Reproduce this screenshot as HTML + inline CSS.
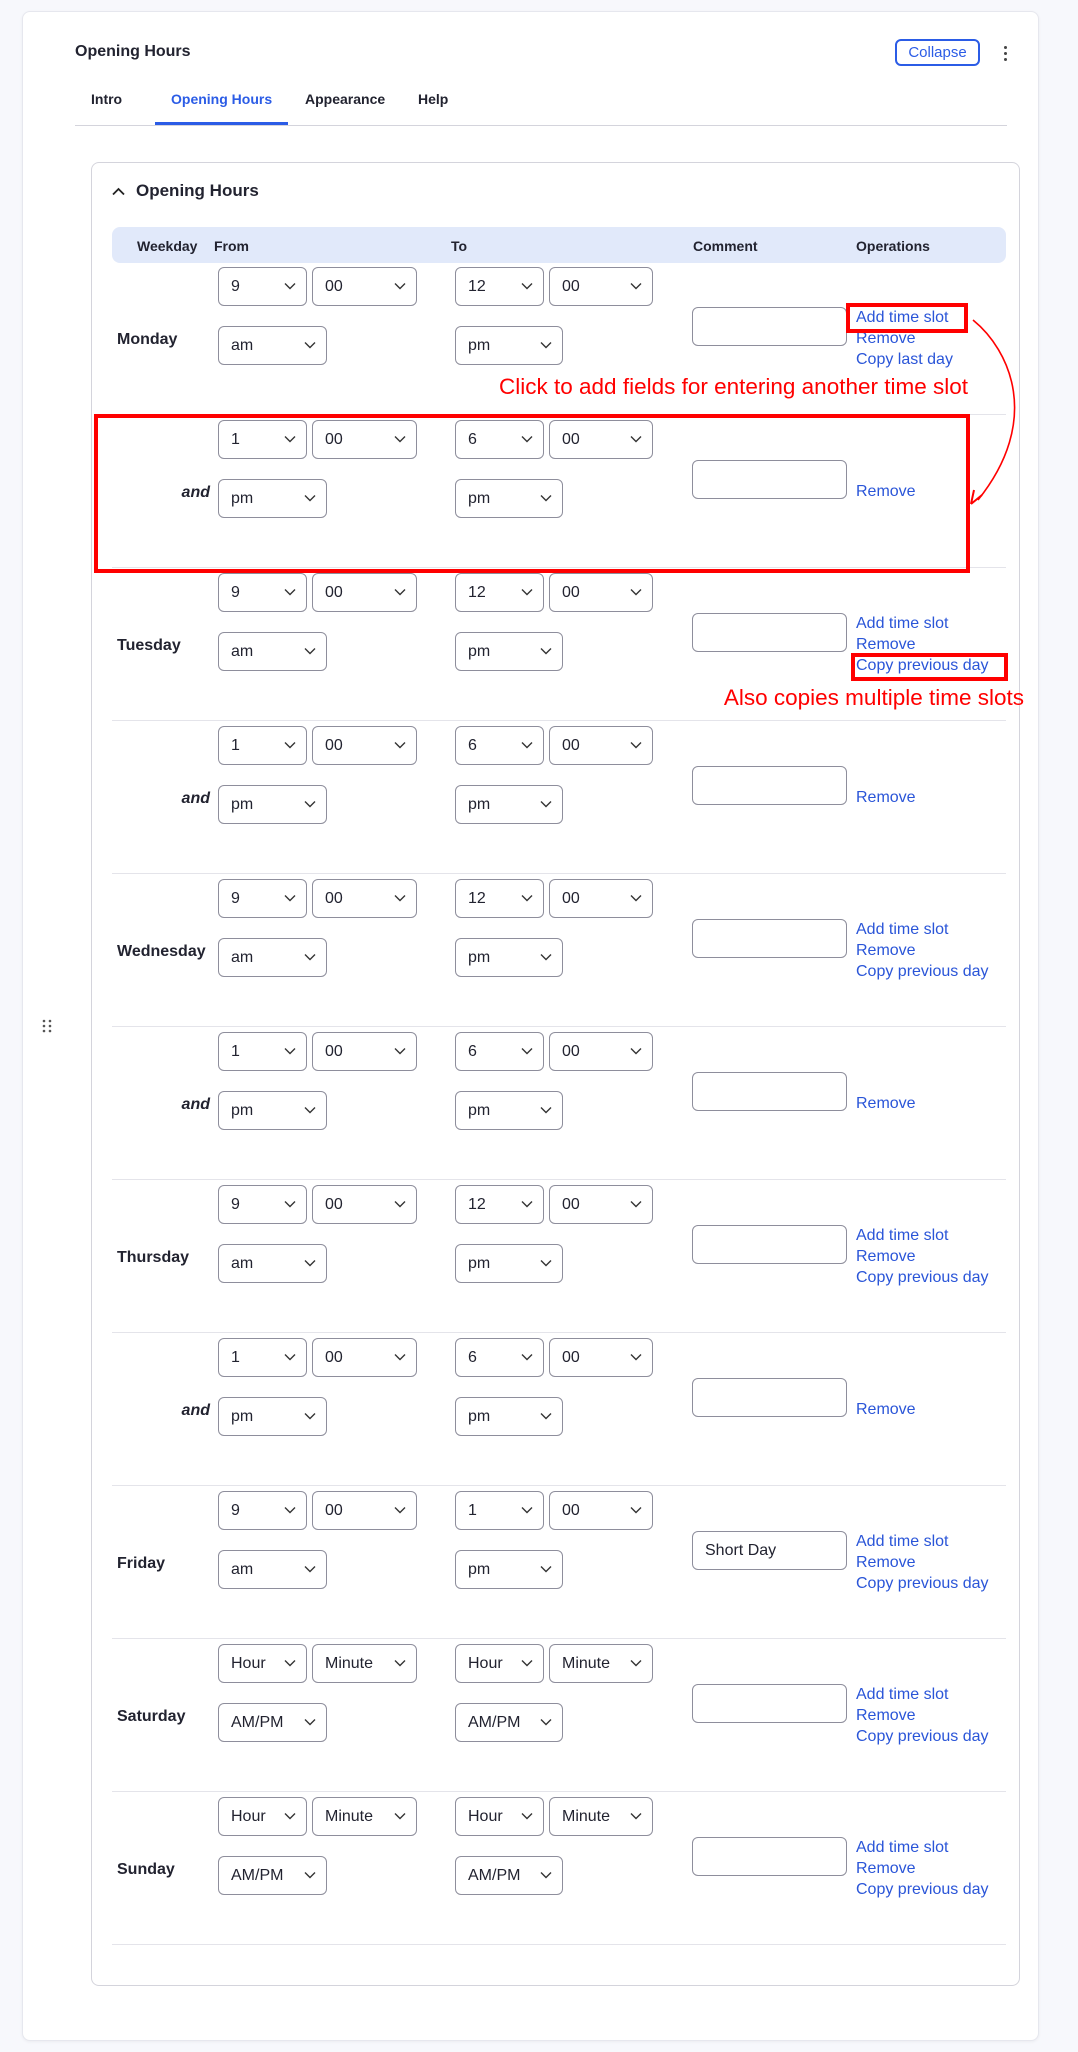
<!DOCTYPE html>
<html><head><meta charset="utf-8"><style>
*{box-sizing:border-box;margin:0;padding:0}
body{width:1078px;height:2052px;background:#f7f8fc;font-family:"Liberation Sans",sans-serif;color:#222330;position:relative;overflow:hidden}
.abs{position:absolute}
.outer{left:22px;top:11px;width:1017px;height:2030px;background:#fff;border:1px solid #e6e7ee;border-radius:8px;box-shadow:0 1px 3px rgba(0,0,0,.05)}
.inner{left:91px;top:162px;width:929px;height:1824px;border:1px solid #d4d4dc;border-radius:8px;background:#fff}
.sel{position:absolute;height:39px;border:1px solid #8e8e9c;border-radius:6px;background:#fff;font-size:16px;line-height:37px;padding-left:12px;color:#222330}
.sel svg{position:absolute;right:10px;top:14px}
.row{position:absolute;left:0;width:1078px;height:153px}
.sep{position:absolute;left:112px;width:894px;height:1px;background:#e4e4ea}
.cm{position:absolute;left:692px;top:46px;width:155px;height:39px;border:1px solid #8e8e9c;border-radius:6px;font-size:16px;line-height:37px;padding-left:12px}
.ops{position:absolute;left:856px;top:46px;font-size:16px;line-height:21px;color:#2a55d8}
.day{position:absolute;left:117px;top:69px;font-size:16px;font-weight:bold;line-height:20px}
.and{position:absolute;right:868px;top:69px;font-size:16px;font-weight:bold;font-style:italic;line-height:20px}
.a{left:218px;top:6px;width:89px}.b{left:312px;top:6px;width:105px}.c{left:218px;top:65px;width:109px}
.d{left:455px;top:6px;width:89px}.e{left:549px;top:6px;width:104px}.f{left:455px;top:65px;width:108px}
.th{position:absolute;top:237px;font-size:14px;font-weight:bold;line-height:18px}
.red{color:#f00;font-size:22.5px}
</style></head><body>
<svg width="0" height="0" style="position:absolute"><defs><symbol id="ch" viewBox="0 0 12 8"><path d="M1 1.5 L6 6.5 L11 1.5" fill="none" stroke="#333" stroke-width="1.4"/></symbol></defs></svg>
<div class="abs outer"></div>
<div class="abs" style="left:75px;top:43px;font-size:16px;font-weight:bold">Opening Hours</div>
<div class="abs" style="left:895px;top:39px;width:85px;height:27px;border:2px solid #2b5ce6;border-radius:6px;color:#2b5ce6;font-size:15px;line-height:23px;text-align:center">Collapse</div>
<div class="abs" style="left:1004px;top:46px;width:3px;height:3px;border-radius:2px;background:#444"></div>
<div class="abs" style="left:1004px;top:52px;width:3px;height:3px;border-radius:2px;background:#444"></div>
<div class="abs" style="left:1004px;top:58px;width:3px;height:3px;border-radius:2px;background:#444"></div>
<div class="abs" style="left:91px;top:91px;font-size:14px;font-weight:bold">Intro</div>
<div class="abs" style="left:171px;top:91px;font-size:14px;font-weight:bold;color:#2b5ce6">Opening Hours</div>
<div class="abs" style="left:305px;top:91px;font-size:14px;font-weight:bold">Appearance</div>
<div class="abs" style="left:418px;top:91px;font-size:14px;font-weight:bold">Help</div>
<div class="abs" style="left:75px;top:125px;width:932px;height:1px;background:#d4d4dc"></div>
<div class="abs" style="left:155px;top:122px;width:133px;height:3px;background:#2b5ce6"></div>
<div class="abs" style="left:42px;top:1019px;font-size:0">
<svg width="10" height="14"><g fill="#555"><circle cx="2" cy="2" r="1.3"/><circle cx="8" cy="2" r="1.3"/><circle cx="2" cy="7" r="1.3"/><circle cx="8" cy="7" r="1.3"/><circle cx="2" cy="12" r="1.3"/><circle cx="8" cy="12" r="1.3"/></g></svg></div>
<div class="abs inner"></div>
<svg class="abs" style="left:112px;top:187px" width="13" height="9"><path d="M1 7.5 L6.5 2 L12 7.5" fill="none" stroke="#222" stroke-width="1.8"/></svg>
<div class="abs" style="left:136px;top:181px;font-size:17px;font-weight:bold">Opening Hours</div>
<div class="abs" style="left:112px;top:227px;width:894px;height:36px;background:#e1e9fa;border-radius:8px"></div>
<div class="th" style="left:137px">Weekday</div>
<div class="th" style="left:214px">From</div>
<div class="th" style="left:451px">To</div>
<div class="th" style="left:693px">Comment</div>
<div class="th" style="left:856px">Operations</div>

<div class="row" style="top:261px"><div class="day">Monday</div>
<div class="sel a">9<svg width="12" height="8"><use href="#ch"/></svg></div><div class="sel b">00<svg width="12" height="8"><use href="#ch"/></svg></div><div class="sel c">am<svg width="12" height="8"><use href="#ch"/></svg></div>
<div class="sel d">12<svg width="12" height="8"><use href="#ch"/></svg></div><div class="sel e">00<svg width="12" height="8"><use href="#ch"/></svg></div><div class="sel f">pm<svg width="12" height="8"><use href="#ch"/></svg></div>
<div class="cm"></div><div class="ops">Add time slot<br>Remove<br>Copy last day</div></div>
<div class="sep" style="top:414px"></div>

<div class="row" style="top:414px"><div class="and">and</div>
<div class="sel a">1<svg width="12" height="8"><use href="#ch"/></svg></div><div class="sel b">00<svg width="12" height="8"><use href="#ch"/></svg></div><div class="sel c">pm<svg width="12" height="8"><use href="#ch"/></svg></div>
<div class="sel d">6<svg width="12" height="8"><use href="#ch"/></svg></div><div class="sel e">00<svg width="12" height="8"><use href="#ch"/></svg></div><div class="sel f">pm<svg width="12" height="8"><use href="#ch"/></svg></div>
<div class="cm"></div><div class="ops" style="top:67px">Remove</div></div>
<div class="sep" style="top:567px"></div>

<div class="row" style="top:567px"><div class="day">Tuesday</div>
<div class="sel a">9<svg width="12" height="8"><use href="#ch"/></svg></div><div class="sel b">00<svg width="12" height="8"><use href="#ch"/></svg></div><div class="sel c">am<svg width="12" height="8"><use href="#ch"/></svg></div>
<div class="sel d">12<svg width="12" height="8"><use href="#ch"/></svg></div><div class="sel e">00<svg width="12" height="8"><use href="#ch"/></svg></div><div class="sel f">pm<svg width="12" height="8"><use href="#ch"/></svg></div>
<div class="cm"></div><div class="ops">Add time slot<br>Remove<br>Copy previous day</div></div>
<div class="sep" style="top:720px"></div>

<div class="row" style="top:720px"><div class="and">and</div>
<div class="sel a">1<svg width="12" height="8"><use href="#ch"/></svg></div><div class="sel b">00<svg width="12" height="8"><use href="#ch"/></svg></div><div class="sel c">pm<svg width="12" height="8"><use href="#ch"/></svg></div>
<div class="sel d">6<svg width="12" height="8"><use href="#ch"/></svg></div><div class="sel e">00<svg width="12" height="8"><use href="#ch"/></svg></div><div class="sel f">pm<svg width="12" height="8"><use href="#ch"/></svg></div>
<div class="cm"></div><div class="ops" style="top:67px">Remove</div></div>
<div class="sep" style="top:873px"></div>

<div class="row" style="top:873px"><div class="day">Wednesday</div>
<div class="sel a">9<svg width="12" height="8"><use href="#ch"/></svg></div><div class="sel b">00<svg width="12" height="8"><use href="#ch"/></svg></div><div class="sel c">am<svg width="12" height="8"><use href="#ch"/></svg></div>
<div class="sel d">12<svg width="12" height="8"><use href="#ch"/></svg></div><div class="sel e">00<svg width="12" height="8"><use href="#ch"/></svg></div><div class="sel f">pm<svg width="12" height="8"><use href="#ch"/></svg></div>
<div class="cm"></div><div class="ops">Add time slot<br>Remove<br>Copy previous day</div></div>
<div class="sep" style="top:1026px"></div>

<div class="row" style="top:1026px"><div class="and">and</div>
<div class="sel a">1<svg width="12" height="8"><use href="#ch"/></svg></div><div class="sel b">00<svg width="12" height="8"><use href="#ch"/></svg></div><div class="sel c">pm<svg width="12" height="8"><use href="#ch"/></svg></div>
<div class="sel d">6<svg width="12" height="8"><use href="#ch"/></svg></div><div class="sel e">00<svg width="12" height="8"><use href="#ch"/></svg></div><div class="sel f">pm<svg width="12" height="8"><use href="#ch"/></svg></div>
<div class="cm"></div><div class="ops" style="top:67px">Remove</div></div>
<div class="sep" style="top:1179px"></div>

<div class="row" style="top:1179px"><div class="day">Thursday</div>
<div class="sel a">9<svg width="12" height="8"><use href="#ch"/></svg></div><div class="sel b">00<svg width="12" height="8"><use href="#ch"/></svg></div><div class="sel c">am<svg width="12" height="8"><use href="#ch"/></svg></div>
<div class="sel d">12<svg width="12" height="8"><use href="#ch"/></svg></div><div class="sel e">00<svg width="12" height="8"><use href="#ch"/></svg></div><div class="sel f">pm<svg width="12" height="8"><use href="#ch"/></svg></div>
<div class="cm"></div><div class="ops">Add time slot<br>Remove<br>Copy previous day</div></div>
<div class="sep" style="top:1332px"></div>

<div class="row" style="top:1332px"><div class="and">and</div>
<div class="sel a">1<svg width="12" height="8"><use href="#ch"/></svg></div><div class="sel b">00<svg width="12" height="8"><use href="#ch"/></svg></div><div class="sel c">pm<svg width="12" height="8"><use href="#ch"/></svg></div>
<div class="sel d">6<svg width="12" height="8"><use href="#ch"/></svg></div><div class="sel e">00<svg width="12" height="8"><use href="#ch"/></svg></div><div class="sel f">pm<svg width="12" height="8"><use href="#ch"/></svg></div>
<div class="cm"></div><div class="ops" style="top:67px">Remove</div></div>
<div class="sep" style="top:1485px"></div>

<div class="row" style="top:1485px"><div class="day">Friday</div>
<div class="sel a">9<svg width="12" height="8"><use href="#ch"/></svg></div><div class="sel b">00<svg width="12" height="8"><use href="#ch"/></svg></div><div class="sel c">am<svg width="12" height="8"><use href="#ch"/></svg></div>
<div class="sel d">1<svg width="12" height="8"><use href="#ch"/></svg></div><div class="sel e">00<svg width="12" height="8"><use href="#ch"/></svg></div><div class="sel f">pm<svg width="12" height="8"><use href="#ch"/></svg></div>
<div class="cm">Short Day</div><div class="ops">Add time slot<br>Remove<br>Copy previous day</div></div>
<div class="sep" style="top:1638px"></div>

<div class="row" style="top:1638px"><div class="day">Saturday</div>
<div class="sel a">Hour<svg width="12" height="8"><use href="#ch"/></svg></div><div class="sel b">Minute<svg width="12" height="8"><use href="#ch"/></svg></div><div class="sel c">AM/PM<svg width="12" height="8"><use href="#ch"/></svg></div>
<div class="sel d">Hour<svg width="12" height="8"><use href="#ch"/></svg></div><div class="sel e">Minute<svg width="12" height="8"><use href="#ch"/></svg></div><div class="sel f">AM/PM<svg width="12" height="8"><use href="#ch"/></svg></div>
<div class="cm"></div><div class="ops">Add time slot<br>Remove<br>Copy previous day</div></div>
<div class="sep" style="top:1791px"></div>

<div class="row" style="top:1791px"><div class="day">Sunday</div>
<div class="sel a">Hour<svg width="12" height="8"><use href="#ch"/></svg></div><div class="sel b">Minute<svg width="12" height="8"><use href="#ch"/></svg></div><div class="sel c">AM/PM<svg width="12" height="8"><use href="#ch"/></svg></div>
<div class="sel d">Hour<svg width="12" height="8"><use href="#ch"/></svg></div><div class="sel e">Minute<svg width="12" height="8"><use href="#ch"/></svg></div><div class="sel f">AM/PM<svg width="12" height="8"><use href="#ch"/></svg></div>
<div class="cm"></div><div class="ops">Add time slot<br>Remove<br>Copy previous day</div></div>
<div class="sep" style="top:1944px"></div>

<div class="abs" style="left:846px;top:303px;width:122px;height:30px;border:4px solid #f00"></div>
<div class="abs red" style="right:110px;top:374px">Click to add fields for entering another time slot</div>
<div class="abs" style="left:94px;top:414px;width:876px;height:159px;border:4px solid #f00"></div>
<svg class="abs" style="left:960px;top:310px" width="80" height="200"><path d="M13 10 C50 40 82 110 18 190" fill="none" stroke="#f00" stroke-width="1.6"/><path d="M11 194 L14 180 M11 194 L22 185" stroke="#f00" stroke-width="2" fill="none"/></svg>
<div class="abs" style="left:851px;top:653px;width:157px;height:28px;border:4px solid #f00"></div>
<div class="abs red" style="right:54px;top:685px">Also copies multiple time slots</div>
</body></html>
